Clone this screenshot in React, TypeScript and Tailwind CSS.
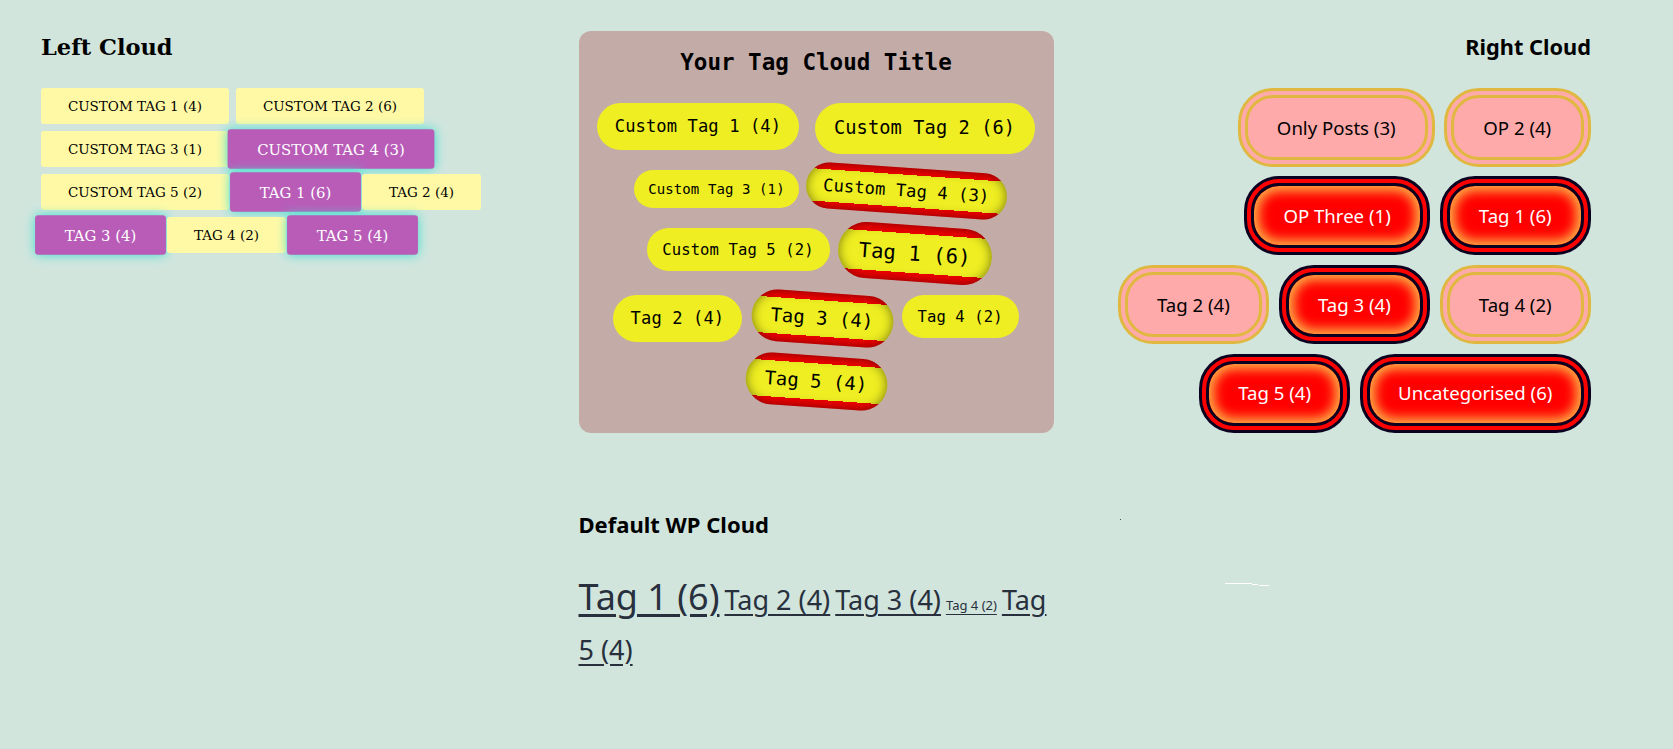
import React from "react";
import clsx from "clsx";

type Tag = { label: string; active?: boolean; box?: string };

const leftRows: Tag[][] = [
  [
    { label: "Custom Tag 1 (4)", box: "w-[188px]" },
    { label: "Custom Tag 2 (6)", box: "w-[188px]" },
  ],
  [
    { label: "Custom Tag 3 (1)", box: "w-[188px]" },
    { label: "Custom Tag 4 (3)", box: "w-[188px] left-[0.5px]", active: true },
  ],
  [
    { label: "Custom Tag 5 (2)", box: "w-[188px]" },
    { label: "Tag 1 (6)", box: "w-[119px]", active: true },
    { label: "Tag 2 (4)", box: "w-[119px]" },
  ],
  [
    { label: "Tag 3 (4)", box: "w-[119px]", active: true },
    { label: "Tag 4 (2)", box: "w-[119px]" },
    { label: "Tag 5 (4)", box: "w-[119px]", active: true },
  ],
];

const centerRows: Tag[][] = [
  [
    { label: "Custom Tag 1 (4)", box: "w-[202px] h-[46.7px] text-[17.11px]" },
    { label: "Custom Tag 2 (6)", box: "w-[220px] h-[50.7px] text-[18.67px]" },
  ],
  [
    { label: "Custom Tag 3 (1)", box: "w-[165px] h-[38px] pt-px text-[14px]" },
    { label: "Custom Tag 4 (3)", box: "w-[183px] h-[42.3px] pt-px text-[15.56px]", active: true },
  ],
  [
    { label: "Custom Tag 5 (2)", box: "w-[183px] h-[43px] pt-[2px] text-[15.56px]" },
    { label: "Tag 1 (6)", box: "w-[140px] h-[50.7px] pt-px text-[18.67px]", active: true },
  ],
  [
    { label: "Tag 2 (4)", box: "w-[129px] h-[47px] pt-px text-[17.11px]" },
    { label: "Tag 3 (4)", box: "w-[128.5px] h-[46.7px] pt-px text-[17.11px]", active: true },
    { label: "Tag 4 (2)", box: "w-[117px] h-[43px] pt-[2px] text-[15.56px]" },
  ],
  [{ label: "Tag 5 (4)", box: "w-[128.5px] h-[46.7px] pt-px text-[17.11px]", active: true }],
];

const rightRows: Tag[][] = [
  [
    { label: "Only Posts (3)", box: "w-[197px] -mr-[0.7px]" },
    { label: "OP 2 (4)", box: "w-[147px]" },
  ],
  [
    { label: "OP Three (1)", box: "w-[186px]", active: true },
    { label: "Tag 1 (6)", box: "w-[151px]", active: true },
  ],
  [
    { label: "Tag 2 (4)", box: "w-[151.3px]" },
    { label: "Tag 3 (4)", box: "w-[151.3px]", active: true },
    { label: "Tag 4 (2)", box: "w-[151px]" },
  ],
  [
    { label: "Tag 5 (4)", box: "w-[151px]", active: true },
    { label: "Uncategorised (6)", box: "w-[231px]", active: true },
  ],
];

function LeftCloud() {
  return (
    <section className="w-[475px] font-['DejaVu_Serif',serif]">
      <h2 className="h-[57px] text-[22.5px] leading-[32px] font-bold whitespace-nowrap">Left Cloud</h2>
      <div className="flex flex-col gap-[7px]">
        {leftRows.map((row, i) => (
          <div key={i} className="flex gap-[7px]">
            {row.map((tag) => (
              <a
                key={tag.label}
                className={clsx(
                  "relative flex h-9 shrink-0 items-center justify-center rounded-[3px] pt-px text-[13.5px] whitespace-nowrap uppercase",
                  tag.box,
                  tag.active
                    ? "scale-110 bg-[#b85cb8] pb-px text-white shadow-[0_0_10px_turquoise]"
                    : "bg-[#fff9a6] text-black",
                )}
              >
                {tag.label}
              </a>
            ))}
          </div>
        ))}
      </div>
    </section>
  );
}

function CenterCloud() {
  return (
    <section className="h-[402px] w-[475px] rounded-xl bg-[#c3aca7] pt-[15px] font-['DejaVu_Sans_Mono',monospace]">
      <h2 className="h-[57px] text-center text-[22.55px] leading-[32px] font-bold whitespace-nowrap">
        Your Tag Cloud Title
      </h2>
      <div className="flex flex-col gap-4">
        {centerRows.map((row, i) => (
          <div key={i} className="flex items-start justify-center gap-[15.6px]">
            {row.map((tag) => (
              <a
                key={tag.label}
                className={clsx(
                  "flex shrink-0 items-center justify-center rounded-[28px] pr-[0.5px] tracking-[0.1px] whitespace-nowrap text-black",
                  tag.box,
                  tag.active
                    ? "scale-110 rotate-4 bg-[linear-gradient(#f00000_15%,#eeee22_15%,#eeee22_85%,#f00000_85%)] shadow-[inset_0_0_10px_rgba(0,0,0,0.5)]"
                    : "bg-[#eeee22]",
                )}
              >
                {tag.label}
              </a>
            ))}
          </div>
        ))}
      </div>
    </section>
  );
}

function RightCloud() {
  return (
    <section className="w-[475px] font-['Noto_Sans',sans-serif]">
      <h2 className="h-[57px] text-right text-[21.75px] leading-[32px] font-bold whitespace-nowrap">Right Cloud</h2>
      <div className="flex flex-col gap-[9.8px]">
        {rightRows.map((row, i) => (
          <div key={i} className="flex justify-end gap-[9.7px] first:-mb-[0.6px]">
            {row.map((tag) => (
              <a
                key={tag.label}
                className={clsx(
                  "flex h-[79px] shrink-0 items-center justify-center rounded-[35px] border-[10px] border-double pr-[0.5px] text-[18.6px] whitespace-nowrap",
                  tag.box,
                  tag.active
                    ? "border-[#0a0020] bg-[red] text-white shadow-[inset_0_0_12px_5px_#ffb347]"
                    : "border-[#e0b840] bg-[#ffaaaa] text-black",
                )}
              >
                {tag.label}
              </a>
            ))}
          </div>
        ))}
      </div>
    </section>
  );
}

function DefaultCloud() {
  return (
    <section className="w-[475px] font-['Noto_Sans',sans-serif]">
      <h2 className="text-[22px] leading-[32px] font-bold whitespace-nowrap">Default WP Cloud</h2>
      <div className="mt-[32px] flex flex-col text-[27px] text-[#28303d]">
        <div className="flex h-[52.5px] items-baseline gap-[5px] whitespace-nowrap">
          <a className="text-[36px] leading-[50px] underline decoration-3 underline-offset-4">Tag 1 (6)</a>
          <a className="leading-[50px] underline decoration-2 underline-offset-4">Tag 2 (4)</a>
          <a className="leading-[50px] underline decoration-2 underline-offset-4">Tag 3 (4)</a>
          <a className="text-[13px] underline decoration-1 underline-offset-4">Tag 4 (2)</a>
          <a className="leading-[50px] underline decoration-2 underline-offset-4">Tag</a>
        </div>
        <a className="leading-[50px] underline decoration-2 underline-offset-4">5 (4)</a>
      </div>
    </section>
  );
}

export default function App() {
  return (
    <main className="h-[749px] w-[1673px] overflow-hidden bg-[#d1e5dd] pt-[31px] pl-[41px] text-black">
      <div className="flex h-[477px] items-start gap-[62.5px]">
        <LeftCloud />
        <CenterCloud />
        <RightCloud />
      </div>
      <div className="flex items-start gap-[62.5px] pl-[537.5px]">
        <DefaultCloud />
        <svg className="h-[80px] w-[180px]" viewBox="0 0 180 80" fill="none">
          <rect x="4" y="11" width="1" height="1" fill="#46504c" />
          <path d="M109 75.5h27M136 76.5h6M143 77.5h10" stroke="white" strokeWidth="1" />
        </svg>
      </div>
    </main>
  );
}
